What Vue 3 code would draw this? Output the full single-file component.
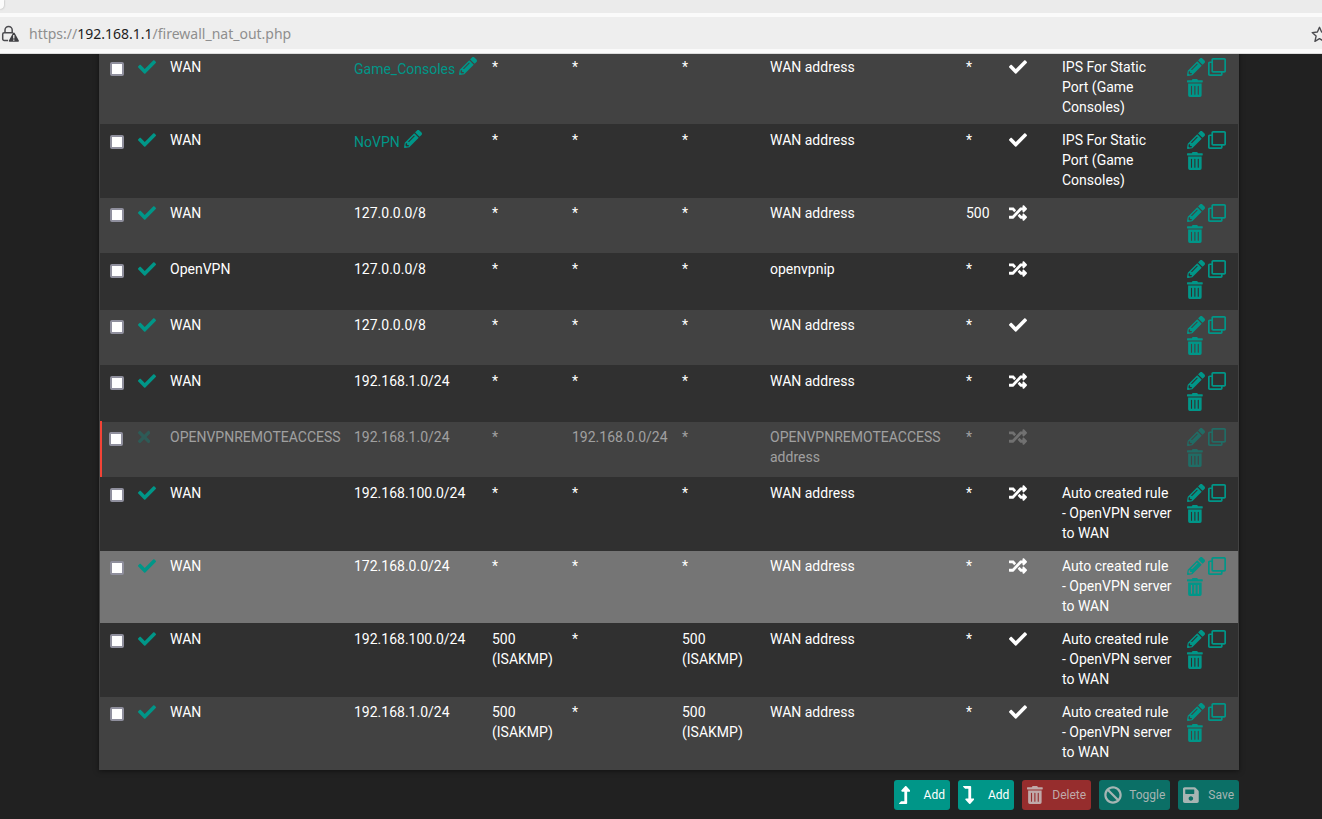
<script setup>
import { h } from 'vue'

const icons = {
  check: [512, 'M173.898 439.404l-166.4-166.4c-9.997-9.997-9.997-26.206 0-36.204l36.203-36.204c9.997-9.998 26.207-9.998 36.204 0L192 312.69 432.095 72.596c9.997-9.997 26.207-9.997 36.204 0l36.203 36.204c9.997 9.997 9.997 26.206 0 36.204l-294.4 294.401c-9.998 9.997-26.207 9.997-36.204-.001z'],
  times: [352, 'M242.72 256l100.07-100.07c12.28-12.28 12.28-32.19 0-44.48l-22.24-22.24c-12.28-12.28-32.19-12.28-44.48 0L176 189.28 75.93 89.21c-12.28-12.28-32.19-12.28-44.48 0L9.21 111.45c-12.28 12.28-12.28 32.19 0 44.48L109.28 256 9.21 356.07c-12.28 12.28-12.28 32.19 0 44.48l22.24 22.24c12.28 12.28 32.2 12.28 44.48 0L176 322.72l100.07 100.07c12.28 12.28 32.2 12.28 44.48 0l22.24-22.24c12.28-12.28 12.28-32.19 0-44.48L242.72 256z'],
  pencil: [512, 'M497.9 142.1l-46.1 46.1c-4.7 4.7-12.3 4.7-17 0l-111-111c-4.7-4.7-4.7-12.3 0-17l46.1-46.1c18.7-18.7 49.1-18.7 67.9 0l60.1 60.1c18.8 18.7 18.8 49.1 0 67.9zM284.2 99.8L21.6 362.4.4 483.9c-2.9 16.4 11.4 30.6 27.8 27.8l121.5-21.3 262.6-262.6c4.7-4.7 4.7-12.3 0-17l-111-111c-4.8-4.7-12.4-4.7-17.1 0zM124.1 339.9c-5.5-5.5-5.5-14.3 0-19.8l154-154c5.5-5.5 14.3-5.5 19.8 0s5.5 14.3 0 19.8l-154 154c-5.5 5.5-14.3 5.5-19.8 0zM88 424h48v36.3l-64.5 11.3-31.1-31.1L51.7 376H88v48z'],
  clone: [512, 'M464 0H144c-26.51 0-48 21.49-48 48v48H48c-26.51 0-48 21.49-48 48v320c0 26.51 21.49 48 48 48h320c26.51 0 48-21.49 48-48v-48h48c26.51 0 48-21.49 48-48V48c0-26.51-21.49-48-48-48zM362 464H54a6 6 0 0 1-6-6V150a6 6 0 0 1 6-6h42v224c0 26.51 21.49 48 48 48h224v42a6 6 0 0 1-6 6zm96-96H150a6 6 0 0 1-6-6V54a6 6 0 0 1 6-6h308a6 6 0 0 1 6 6v308a6 6 0 0 1-6 6z'],
  trash: [448, 'M32 464a48 48 0 0 0 48 48h288a48 48 0 0 0 48-48V128H32zm272-256a16 16 0 0 1 32 0v224a16 16 0 0 1-32 0zm-96 0a16 16 0 0 1 32 0v224a16 16 0 0 1-32 0zm-96 0a16 16 0 0 1 32 0v224a16 16 0 0 1-32 0zM432 32H312l-9.4-18.7A24 24 0 0 0 281.1 0H166.8a23.72 23.72 0 0 0-21.4 13.3L136 32H16A16 16 0 0 0 0 48v32a16 16 0 0 0 16 16h416a16 16 0 0 0 16-16V48a16 16 0 0 0-16-16z'],
  random: [512, 'M504.971 359.029c9.373 9.373 9.373 24.569 0 33.941l-80 79.984c-15.01 15.01-40.971 4.49-40.971-16.971V416h-58.785a12.004 12.004 0 0 1-8.773-3.812l-70.556-75.596 53.333-57.143L352 336h32v-39.981c0-21.438 25.943-31.998 40.971-16.971l80 79.981zM12 176h84l52.781 56.551 53.333-57.143-70.556-75.596A11.999 11.999 0 0 0 122.785 96H12c-6.627 0-12 5.373-12 12v56c0 6.627 5.373 12 12 12zm372 0v39.984c0 21.46 25.961 31.98 40.971 16.971l80-79.984c9.373-9.373 9.373-24.569 0-33.941l-80-79.981C409.943 24.021 384 34.582 384 56.019V96h-58.785a12.004 12.004 0 0 0-8.773 3.812L96 336H12c-6.627 0-12 5.373-12 12v56c0 6.627 5.373 12 12 12h110.785c3.326 0 6.503-1.381 8.773-3.812L352 176h32z'],
  ban: [512, 'M256 8C119.034 8 8 119.033 8 256s111.034 248 248 248 248-111.034 248-248S392.967 8 256 8zm130.108 117.892c65.448 65.448 70 165.481 20.677 235.637L150.47 105.216c70.204-49.356 170.226-44.735 235.638 20.676zM125.892 386.108c-65.448-65.448-70-165.481-20.677-235.637L361.53 406.784c-70.203 49.356-170.226 44.736-235.638-20.676z'],
  save: [448, 'M433.941 129.941l-83.882-83.882A48 48 0 0 0 316.118 32H48C21.49 32 0 53.49 0 80v352c0 26.51 21.49 48 48 48h352c26.51 0 48-21.49 48-48V163.882a48 48 0 0 0-14.059-33.941zM224 416c-35.346 0-64-28.654-64-64 0-35.346 28.654-64 64-64s64 28.654 64 64c0 35.346-28.654 64-64 64zm96-304.52V212c0 6.627-5.373 12-12 12H76c-6.627 0-12-5.373-12-12V108c0-6.627 5.373-12 12-12h228.52c3.183 0 6.235 1.264 8.485 3.515l3.48 3.48A11.996 11.996 0 0 1 320 111.48z'],
  up: [320, 'M313.553 119.669L209.587 7.666c-9.485-10.214-25.676-10.229-35.174 0L70.438 119.669C56.232 134.969 67.062 160 88.025 160H152v272H68.024a11.996 11.996 0 0 0-8.485 3.515l-56 56C-4.021 499.074 1.333 512 12.024 512H208c13.255 0 24-10.745 24-24V160h63.966c20.878 0 31.851-24.969 17.587-40.331z'],
  down: [320, 'M313.553 392.331L209.587 504.334c-9.485 10.214-25.676 10.229-35.174 0L70.438 392.331C56.232 377.031 67.062 352 88.025 352H152V80H68.024a11.996 11.996 0 0 1-8.485-3.515l-56-56C-4.021 12.926 1.333 0 12.024 0H208c13.255 0 24 10.745 24 24v328h63.966c20.878 0 31.851 24.969 17.587 40.331z'],
}

const Icon = (props) =>
  h('svg', { viewBox: `0 0 ${icons[props.name][0]} 512`, fill: 'currentColor', 'aria-hidden': 'true' }, [
    h('path', { d: icons[props.name][1] }),
  ])
Icon.props = ['name']

const games = 'IPS For Static Port (Game Consoles)'
const auto = 'Auto created rule - OpenVPN server to WAN'
const rule = (iface, src, staticPort, desc = '', extra = {}) => ({
  iface, src, srcPort: '*', dst: '*', dstPort: '*', nat: 'WAN address', natPort: '*', staticPort, desc, ...extra,
})
const isakmp = { srcPort: '500 (ISAKMP)', dstPort: '500 (ISAKMP)' }

const rules = [
  rule('WAN', 'Game_Consoles', true, games, { alias: true }),
  rule('WAN', 'NoVPN', true, games, { alias: true }),
  rule('WAN', '127.0.0.0/8', false, '', { natPort: '500' }),
  rule('OpenVPN', '127.0.0.0/8', false, '', { nat: 'openvpnip' }),
  rule('WAN', '127.0.0.0/8', true),
  rule('WAN', '192.168.1.0/24', false),
  rule('OPENVPNREMOTEACCESS', '192.168.1.0/24', false, '', { dst: '192.168.0.0/24', nat: 'OPENVPNREMOTEACCESS address', disabled: true }),
  rule('WAN', '192.168.100.0/24', false, auto),
  rule('WAN', '172.168.0.0/24', false, auto, { hover: true }),
  rule('WAN', '192.168.100.0/24', true, auto, isakmp),
  rule('WAN', '192.168.1.0/24', true, auto, isakmp),
]

const columns = ['select', 'state', 'iface', 'src', 'sport', 'dst', 'dport', 'nat', 'nport', 'static', 'desc', 'actions']

const buttons = [
  { icon: 'up', label: 'Add' },
  { icon: 'down', label: 'Add' },
  { icon: 'trash', label: 'Delete', disabled: true, danger: true },
  { icon: 'ban', label: 'Toggle', disabled: true },
  { icon: 'save', label: 'Save', disabled: true },
]
</script>

<template>
  <div class="window">
    <header class="chrome">
      <div class="tabs"><i class="tab-edge"></i></div>
      <div class="address">
        <svg class="lock" viewBox="0 0 18 18" aria-hidden="true">
          <path d="M4 8V5a3.6 3.6 0 0 1 7.200 0v3M7 15.500H3.200a1.500 1.500 0 0 1-1.500-1.500V9.300a1.500 1.500 0 0 1 1.500-1.500H12" fill="none" stroke="#4b4b4f" stroke-width="1.500" />
          <path d="M12.800 7.600c.5 0 .8.200 1 .600l4 7.400c.3.600 0 1.200-.7 1.200H8.600c-.7 0-1-.6-.7-1.200l4-7.400c.2-.4.500-.6.900-.6z" fill="#3f3f43" />
          <path d="M12.800 10v3.500M12.800 14.500v1.300" stroke="#eee" stroke-width="1.300" />
        </svg>
        <div class="url" role="textbox" aria-label="Address" tabindex="0">https://<b>192.168.1.1</b>/firewall_nat_out.php</div>
        <button class="star" type="button" aria-label="Bookmark this page">
          <svg viewBox="0 0 16 16" aria-hidden="true">
            <path d="M8 1.200l2 4.500 4.900.500-3.700 3.300 1.100 4.900L8 11.900l-4.300 2.500 1.100-4.900L1.100 6.200 6 5.700z" fill="none" stroke="#4b4b4f" stroke-width="1.300" stroke-linejoin="round" />
          </svg>
        </button>
      </div>
    </header>

    <main class="page">
      <section class="panel">
        <table>
          <colgroup>
            <col v-for="c in columns" :key="c" :class="'c-' + c" />
          </colgroup>
          <tbody>
            <tr v-for="(r, i) in rules" :key="i" :class="{ disabled: r.disabled, hover: r.hover }">
              <td class="select"><input type="checkbox" :aria-label="'Select rule ' + (i + 1)" /></td>
              <td class="glyph state">
                <button type="button" :aria-label="r.disabled ? 'Enable rule' : 'Disable rule'"><Icon :name="r.disabled ? 'times' : 'check'" /></button>
              </td>
              <td>{{ r.iface }}</td>
              <td>
                <a v-if="r.alias" class="alias" href="#">{{ r.src }}<Icon name="pencil" /></a>
                <template v-else>{{ r.src }}</template>
              </td>
              <td>{{ r.srcPort }}</td>
              <td>{{ r.dst }}</td>
              <td>{{ r.dstPort }}</td>
              <td>{{ r.nat }}</td>
              <td>{{ r.natPort }}</td>
              <td class="glyph mode"><Icon :name="r.staticPort ? 'check' : 'random'" /></td>
              <td>{{ r.desc }}</td>
              <td class="glyph">
                <div class="actions">
                  <a href="#" aria-label="Edit"><Icon name="pencil" /></a>
                  <a href="#" aria-label="Copy"><Icon name="clone" /></a>
                  <a href="#" aria-label="Delete"><Icon name="trash" /></a>
                </div>
              </td>
            </tr>
          </tbody>
        </table>
      </section>

      <nav class="toolbar">
        <button v-for="(b, i) in buttons" :key="i" type="button" :disabled="b.disabled" :class="{ danger: b.danger }">
          <span class="slot"><Icon :name="b.icon" /></span>{{ b.label }}
        </button>
      </nav>
    </main>
  </div>
</template>

<style>
body {
  background: #212121;
}
</style>

<style scoped>
.window {
  height: 100vh;
  display: flex;
  flex-direction: column;
  overflow: hidden;
  background: #212121;
  font-family: Roboto, "Liberation Sans", sans-serif;
  font-size: 14px;
  line-height: 20px;
  color: #fff;
}
.window * {
  box-sizing: border-box;
}
svg {
  display: block;
  flex: none;
}
button {
  font: inherit;
  border: 0;
  padding: 0;
  background: none;
  color: inherit;
}
.chrome {
  flex: none;
  position: relative;
  z-index: 1;
  background: #fafafa;
  border-bottom: 1px solid #dcdcdc;
  padding-bottom: 4px;
}
.tabs {
  height: 13px;
  background: #ebebeb;
  margin-bottom: 4px;
}
.tab-edge {
  display: block;
  width: 4px;
  height: 9px;
  background: #fbfbfb;
  border-radius: 0 0 4px 0;
  box-shadow: 0 0 2px #999;
}
.address {
  height: 32px;
  padding-top: 2px;
  background: #eee;
  display: flex;
  align-items: center;
  overflow: hidden;
}
.lock {
  width: 18px;
  height: 18px;
  margin-left: 1px;
}
.url {
  flex: 1;
  margin-left: 10px;
  font-family: "Noto Sans", sans-serif;
  color: #8e8e8e;
}
.url b {
  font-weight: 400;
  color: #1c1c1c;
}
.star {
  margin-right: -6px;
}
.star svg {
  width: 17px;
  height: 17px;
}
.page {
  flex: 1;
  padding: 0 83px 0 99px;
}
.panel {
  margin-top: -3px;
  background: #303030;
  border: solid #424242;
  border-width: 0 1px 1px;
  box-shadow: 0 1px 5px rgba(0, 0, 0, 0.5);
}
table {
  width: 100%;
  table-layout: fixed;
  border-collapse: collapse;
}
.c-select { width: 32px; }
.c-state { width: 32px; }
.c-iface { width: 184px; }
.c-src { width: 138px; }
.c-sport { width: 80px; }
.c-dst { width: 110px; }
.c-dport { width: 88px; }
.c-nat { width: 196px; }
.c-nport { width: 43px; }
.c-static { width: 53px; }
.c-desc { width: 125px; }
.c-actions { width: 57px; }
td {
  height: 56px;
  padding: 6px 6px 7px;
  vertical-align: top;
}
tr:nth-child(odd) {
  background: #424242;
}
tr:nth-child(odd) td {
  box-shadow: inset 0 1px #303030;
}
tr.hover {
  background: #757575;
}
.select {
  padding: 11px 0 0 10px;
}
.select input {
  appearance: none;
  display: block;
  width: 14px;
  height: 14px;
  margin: 0;
  border: 2px solid #8f8f9d;
  border-radius: 2px;
  background: #fff;
}
.glyph {
  padding: 7px 0 6px 6px;
}
.glyph svg,
.alias svg {
  height: 18px;
}
.state,
.alias,
.actions a {
  color: #009688;
}
.alias {
  display: flex;
  gap: 4px;
  line-height: 24px;
  text-decoration: none;
}
.actions {
  display: flex;
  flex-wrap: wrap;
  gap: 3px;
}
.disabled td {
  color: rgba(255, 255, 255, 0.5);
}
tr.disabled:nth-child(odd) .select {
  padding-left: 9px;
  box-shadow: inset 2px 0 #f44336, inset 0 1px #303030;
}
.disabled .state svg {
  color: #009688;
  opacity: 0.3;
}
.disabled .mode svg {
  opacity: 0.5;
}
.disabled .actions {
  opacity: 0.5;
}
.toolbar {
  display: flex;
  justify-content: flex-end;
  gap: 8px;
  padding: 10px 0;
}
.toolbar button {
  display: flex;
  align-items: center;
  gap: 7px;
  height: 30px;
  padding: 0 5px;
  border-radius: 3px;
  background: #009688;
  font-size: 12px;
}
.toolbar .danger {
  background: #f44336;
}
.toolbar button:disabled {
  background: #0b6f66;
  color: #a6b5b3;
}
.toolbar .danger:disabled {
  background: #962d2d;
  color: #c0a9a9;
}
.slot {
  width: 18px;
}
.slot svg {
  height: 18px;
}
</style>
